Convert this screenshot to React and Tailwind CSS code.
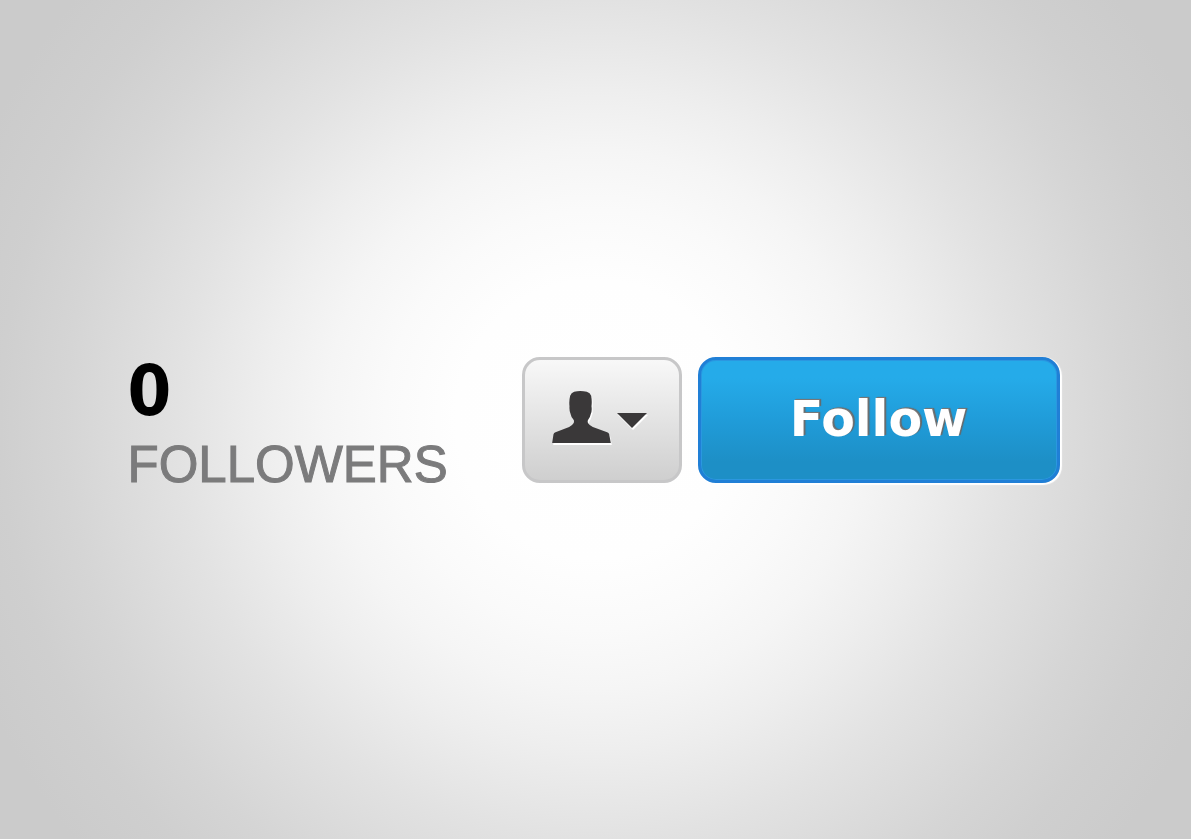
import { useState } from "react";

function PersonIcon() {
  return (
    <svg
      viewBox="0 0 176 156"
      className="w-[59px] h-[52px] overflow-visible drop-shadow-[1px_2px_0_#fff]"
      fill="#3a3839"
      aria-hidden="true"
    >
      <path d="M0 156 L4 130 Q5 126 10 124 L51 108 Q60 104 64 97 Q67 91 64 86 Q57 79 55 68 Q51 60 52 46 Q50 30 54 14 Q57 5 66 2 Q84 -2 104 2 Q114 5 117 14 Q120 30 118 46 Q120 60 116 68 Q114 79 108 86 Q105 91 108 97 Q112 104 122 108 L165 124 Q170 126 171 130 L176 156 Z" />
    </svg>
  );
}

function CaretIcon() {
  return (
    <svg
      viewBox="0 0 30 15"
      className="mt-2 w-[30px] h-[15px] overflow-visible drop-shadow-[1px_2px_0_#fff]"
      fill="#3a3839"
      aria-hidden="true"
    >
      <path d="M0 0 H30 L15 15 Z" />
    </svg>
  );
}

export default function App() {
  const [following, setFollowing] = useState(false);
  const [open, setOpen] = useState(false);

  return (
    <main className="min-h-screen flex items-center justify-center pl-4 pr-5 bg-[radial-gradient(circle_at_center,#ffffff_0px,#fefefe_140px,#fafafa_210px,#f5f5f5_270px,#eeeeee_330px,#e2e2e2_419px,#dcdcdc_470px,#d5d5d5_530px,#cfcfcf_595px,#cbcbcb_670px)]">
      <div className="w-full max-w-[932px] flex flex-wrap items-center justify-between gap-4">
        <div className="pt-[10px]">
          <div className="font-['DejaVu_Sans_Condensed','DejaVu_Sans',sans-serif] font-stretch-condensed font-bold text-[70px] leading-[72px] text-black">
            {following ? 1 : 0}
          </div>
          <div className="font-['Liberation_Sans',Arial,sans-serif] text-[51px] leading-[60px] mt-2 text-[#7b7b7c] [-webkit-text-stroke:1px_#7b7b7c]">
            FOLLOWERS
          </div>
        </div>

        <div className="flex flex-wrap gap-4">
          <button
            type="button"
            aria-label="User options"
            aria-expanded={open}
            onClick={() => setOpen(!open)}
            className="w-40 h-[126px] flex items-center justify-center gap-[6px] pb-[6px] pr-1 rounded-[18px] border-3 border-[#c7c7c8] bg-linear-to-b from-[#f8f8f8] to-[#cfcfcf]"
          >
            <PersonIcon />
            <CaretIcon />
          </button>
          <button
            type="button"
            aria-pressed={following}
            onClick={() => setFollowing(!following)}
            className="w-[362px] h-[126px] rounded-[18px] border-3 border-[#207fd6] bg-linear-to-b from-[#25abe9] from-15% via-[#209cd9] via-50% to-[#1d8fc6] to-85% shadow-[inset_0_0_0_1px_#2b97e0,1px_1px_1px_1px_#ffffff] font-['DejaVu_Sans',Verdana,sans-serif] font-bold text-[49px] leading-[56px] text-white [text-shadow:1px_-1px_0_#777777,2px_-1px_1px_#666666]"
          >
            Follow
          </button>
        </div>
      </div>
    </main>
  );
}
